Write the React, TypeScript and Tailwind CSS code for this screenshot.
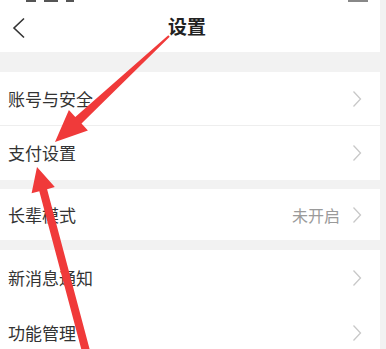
const font = { fontFamily: '"Noto Sans CJK SC", "Noto Sans", sans-serif' }

function Chevron() {
  return (
    <svg width="10" height="18" viewBox="0 0 10 18" className="shrink-0">
      <path d="M1.5 1.5 L8.5 9 L1.5 16.5" fill="none" stroke="#c8c8c8" strokeWidth="1.3" />
    </svg>
  )
}

function Row({ label, value, h = 'h-[55px]' }: { label: string; value?: string; h?: string }) {
  return (
    <div className={`shrink-0 flex items-center justify-between bg-white pl-2 pr-[18px] ${h}`}>
      <span className="text-[17px] text-[#333]">{label}</span>
      <div className="flex items-center gap-3">
        {value && <span className="text-[16px] text-[#9a9a9a]">{value}</span>}
        <Chevron />
      </div>
    </div>
  )
}

export default function App() {
  return (
    <div className="relative w-[386px] h-[349px] overflow-hidden bg-white flex" style={font}>
      <div className="w-[380px] flex flex-col">
        {/* header */}
        <div className="relative shrink-0 h-[52px] bg-white flex items-center justify-center pr-[6px]">
          <div className="absolute top-0 left-[26px] flex gap-2">
            <div className="w-[10px] h-[2px] bg-[#555]" />
            <div className="w-[14px] h-[2px] bg-[#555]" />
            <div className="w-[8px] h-[2px] bg-[#555]" />
          </div>
          <div className="absolute top-0 right-[12px] w-[20px] h-[2px] bg-[#888]" />
          <svg width="14" height="22" viewBox="0 0 14 22" className="absolute left-[12px] top-[17px]">
            <path d="M12 1.5 L2 11 L12 20.5" fill="none" stroke="#333" strokeWidth="1.6" />
          </svg>
          <span className="text-[19px] font-bold text-[#222]">设置</span>
        </div>
        <div className="shrink-0 h-[20px] bg-[#f2f2f2]" />
        <Row label="账号与安全" h="h-[53px]" />
        <div className="shrink-0 h-px bg-[#eeeeee]" />
        <Row label="支付设置" h="h-[54px]" />
        <div className="shrink-0 h-[9px] bg-[#f2f2f2]" />
        <Row label="长辈模式" value="未开启" h="h-[51px]" />
        <div className="shrink-0 h-[10px] bg-[#f2f2f2]" />
        <Row label="新消息通知" />
        <Row label="功能管理" />
      </div>
      <div className="w-[6px] bg-[#f2f2f2]" />

      {/* red annotation arrows */}
      <svg width="386" height="349" viewBox="0 0 386 349" className="absolute inset-0 pointer-events-none">
        <polygon
          points="168.3,35.3 75.3,116.9 68.9,110 55,142 87.9,130.4 81.5,123.5 169.7,36.7"
          fill="#f03a3a"
        />
        <polygon
          points="83.1,356 39.3,191.2 31.6,193.3 37,167 54.8,187.1 47.1,189.2 90.9,354"
          fill="#f03a3a"
        />
      </svg>
    </div>
  )
}
